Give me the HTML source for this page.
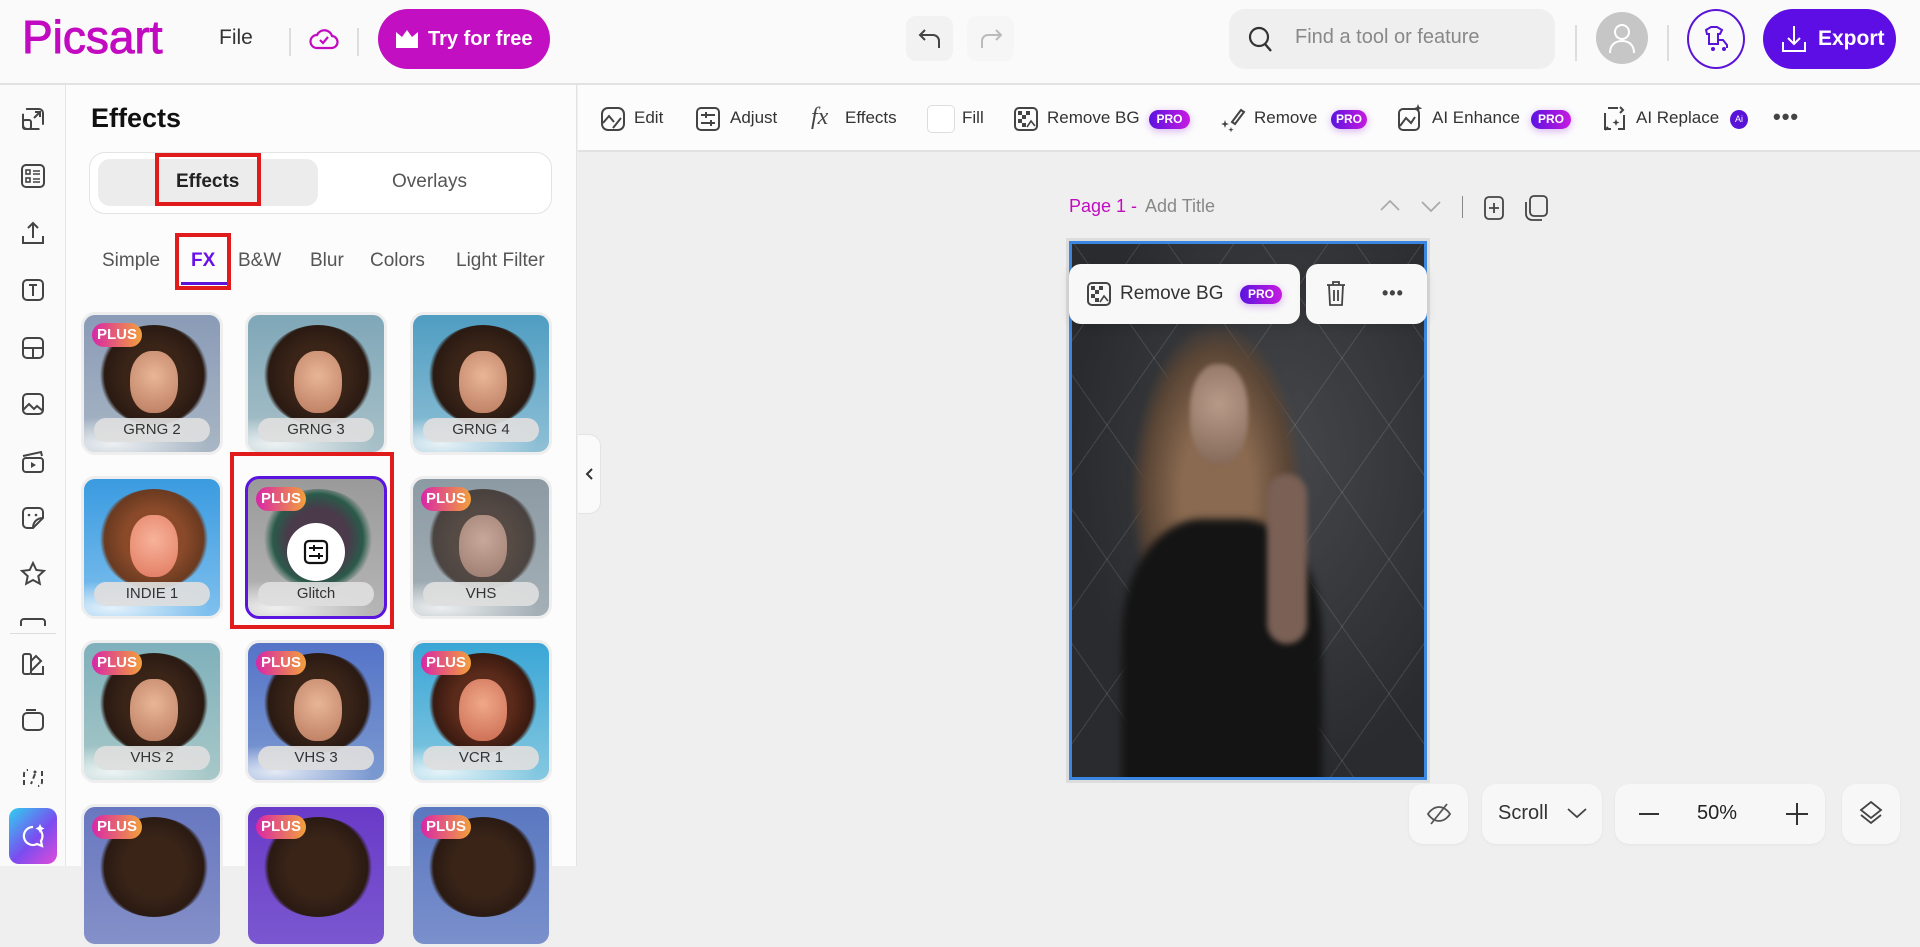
<!DOCTYPE html>
<html><head><meta charset="utf-8">
<style>
*{box-sizing:border-box;margin:0;padding:0}
body{width:1920px;height:866px;overflow:hidden;background:#efefef;font-family:"Liberation Sans",sans-serif;color:#222;position:relative}
.a{position:absolute}
.top{left:0;top:0;width:1920px;height:85px;background:#fafafa;border-bottom:2px solid #e2e2e2}
.sep{width:2px;height:28px;background:#ddd;top:28px}
.rail{left:0;top:85px;width:66px;height:781px;background:#fafafa;border-right:1px solid #e6e6e6}
.panel{left:66px;top:85px;width:511px;height:781px;background:#fcfcfc;border-right:1px solid #e3e3e3}
.tb{left:578px;top:85px;width:1342px;height:67px;background:#fcfcfc;border-bottom:2px solid #e2e2e2}
.ti{font-size:17px;color:#333;top:108px}
.pro{height:19px;border-radius:10px;background:linear-gradient(90deg,#5b13e0,#c71ae0);color:#fff;font-size:12px;font-weight:bold;line-height:19px;text-align:center;top:110px;box-shadow:0 2px 8px rgba(150,40,220,.35)}
.card{width:142px;height:143px;border-radius:14px;overflow:hidden;border:3px solid #eee}
.card .hair{position:absolute;left:14px;top:10px;width:112px;height:100px;border-radius:50%;background:radial-gradient(circle,#3a2418 40%,#2a1a12 66%,rgba(40,25,15,0) 72%)}
.card .face{position:absolute;left:46px;top:36px;width:48px;height:62px;border-radius:45%;background:radial-gradient(circle at 50% 40%,#e9b597,#b97a5e)}
.card .cl{position:absolute;left:0;bottom:0;width:142px;height:40px;background:radial-gradient(ellipse at 20% 80%,rgba(255,255,255,.8),rgba(255,255,255,0) 60%)}
.card .lb{position:absolute;left:10px;bottom:10px;width:116px;height:24px;border-radius:12px;background:rgba(222,222,222,.93);font-size:15px;color:#333;text-align:center;line-height:24px}
.plus{position:absolute;left:8px;top:8px;width:50px;height:24px;border-radius:12px;background:linear-gradient(90deg,#d926a8,#f2a03a);color:#fff;font-weight:bold;font-size:15px;line-height:24px;text-align:center}
.ri{left:20px;width:26px;height:26px}
.ctl{background:#f7f7f7;border-radius:14px;height:60px;top:784px;box-shadow:0 1px 3px rgba(0,0,0,.05)}
</style></head><body>

<!-- top bar -->
<div class="a top"></div>
<div class="a" style="left:22px;top:10px;font-size:46px;color:#c20bc1;letter-spacing:0px;-webkit-text-stroke:1px #c20bc1">Picsart</div>
<div class="a" style="left:219px;top:26px;font-size:21px;color:#333">File</div>
<div class="a sep" style="left:289px"></div>
<svg class="a" style="left:309px;top:24px" width="30" height="30" viewBox="0 0 30 30"><path d="M8 24h14a6 6 0 0 0 1-12 8 8 0 0 0-15-1 6 6 0 0 0 0 13z" fill="none" stroke="#c20bc1" stroke-width="2.2"/><path d="M11 16l3 3 5-6" fill="none" stroke="#c20bc1" stroke-width="2.2"/></svg>
<div class="a sep" style="left:357px"></div>
<div class="a" style="left:378px;top:9px;width:172px;height:60px;border-radius:30px;background:#c10fc1;color:#fff;font-size:20px;font-weight:bold;line-height:60px;padding-left:50px">Try for free</div>
<svg class="a" style="left:394px;top:28px" width="26" height="22" viewBox="0 0 26 22"><path d="M2 4l6 5 5-7 5 7 6-5v16H2z" fill="#fff"/></svg>
<div class="a" style="left:906px;top:16px;width:47px;height:45px;border-radius:10px;background:#f2f2f2"></div>
<svg class="a" style="left:917px;top:26px" width="26" height="26" viewBox="0 0 26 26"><path d="M8 4L3 9l5 5M3 9h13a6 6 0 0 1 6 6v7" fill="none" stroke="#444" stroke-width="2"/></svg>
<div class="a" style="left:967px;top:16px;width:47px;height:45px;border-radius:10px;background:#f6f6f6"></div>
<svg class="a" style="left:978px;top:26px" width="26" height="26" viewBox="0 0 26 26"><path d="M18 4l5 5-5 5M23 9H10a6 6 0 0 0-6 6v7" fill="none" stroke="#bbb" stroke-width="2"/></svg>
<div class="a" style="left:1229px;top:9px;width:326px;height:60px;border-radius:16px;background:#efefef"></div>
<svg class="a" style="left:1247px;top:25px" width="28" height="30" viewBox="0 0 28 30"><circle cx="12" cy="12" r="9" fill="none" stroke="#333" stroke-width="2.2"/><path d="M18 19l6 7" stroke="#333" stroke-width="2.4"/></svg>
<div class="a" style="left:1295px;top:26px;font-size:20px;color:#888">Find a tool or feature</div>
<div class="a sep" style="left:1575px;top:25px;height:36px"></div>
<div class="a" style="left:1596px;top:12px;width:52px;height:52px;border-radius:50%;background:#c6c6c6"></div>
<svg class="a" style="left:1607px;top:22px" width="30" height="32" viewBox="0 0 30 32"><circle cx="15" cy="10" r="7" fill="none" stroke="#fff" stroke-width="2"/><path d="M3 31c0-8 5-12 12-12s12 4 12 12" fill="none" stroke="#fff" stroke-width="2"/></svg>
<div class="a sep" style="left:1667px;top:25px;height:36px"></div>
<div class="a" style="left:1687px;top:9px;width:58px;height:60px;border-radius:50%;border:2px solid #5a14d8"></div>
<svg class="a" style="left:1701px;top:24px" width="30" height="30" viewBox="0 0 30 30"><path d="M5 6l5-3h6l5 3-2 4h-2v10H8V10H6z" fill="none" stroke="#5a14d8" stroke-width="2"/><circle cx="12" cy="25" r="2" fill="#5a14d8"/><circle cx="23" cy="25" r="2" fill="#5a14d8"/><path d="M17 16h5l4 5v3" fill="none" stroke="#5a14d8" stroke-width="2"/></svg>
<div class="a" style="left:1763px;top:9px;width:133px;height:60px;border-radius:30px;background:#5d0ee5;color:#fff;font-size:21px;font-weight:bold;line-height:60px;padding-left:55px">Export</div>
<svg class="a" style="left:1780px;top:24px" width="28" height="30" viewBox="0 0 28 30"><path d="M14 2v18M8 14l6 6 6-6M3 18v9h22v-9" fill="none" stroke="#fff" stroke-width="2"/></svg>

<!-- rail -->
<div class="a rail"></div>
<svg class="a ri" style="top:106px" viewBox="0 0 26 26"><rect x="3" y="3" width="20" height="20" rx="4" fill="none" stroke="#444" stroke-width="2" stroke-dasharray="30 6"/><rect x="3" y="14" width="8" height="9" rx="2" fill="none" stroke="#444" stroke-width="2"/><path d="M14 12l6-6M15 6h5v5" fill="none" stroke="#444" stroke-width="2"/></svg>
<svg class="a ri" style="top:163px" viewBox="0 0 26 26"><rect x="2" y="2" width="22" height="22" rx="4" fill="none" stroke="#444" stroke-width="2"/><rect x="6" y="7" width="4" height="4" fill="none" stroke="#444" stroke-width="1.6"/><rect x="6" y="15" width="4" height="4" fill="none" stroke="#444" stroke-width="1.6"/><path d="M13 8h7M13 11h7M13 16h7M13 19h7" stroke="#444" stroke-width="1.6"/></svg>
<svg class="a ri" style="top:220px" viewBox="0 0 26 26"><path d="M13 3v15M8 8l5-5 5 5M3 16v7h20v-7" fill="none" stroke="#444" stroke-width="2"/></svg>
<svg class="a ri" style="top:277px" viewBox="0 0 26 26"><rect x="3" y="3" width="20" height="20" rx="4" fill="none" stroke="#444" stroke-width="2"/><path d="M9 8h8M13 8v11" stroke="#444" stroke-width="2"/></svg>
<svg class="a ri" style="top:335px" viewBox="0 0 26 26"><rect x="3" y="3" width="20" height="20" rx="4" fill="none" stroke="#444" stroke-width="2"/><path d="M3 13h20M13 13v10" stroke="#444" stroke-width="2"/></svg>
<svg class="a ri" style="top:391px" viewBox="0 0 26 26"><rect x="3" y="3" width="20" height="20" rx="4" fill="none" stroke="#444" stroke-width="2"/><path d="M3 19l6-6 5 5 3-3 6 5" fill="none" stroke="#444" stroke-width="2"/></svg>
<svg class="a ri" style="top:449px" viewBox="0 0 26 26"><rect x="3" y="9" width="20" height="14" rx="3" fill="none" stroke="#444" stroke-width="2"/><path d="M3 7l18-4 1 4" fill="none" stroke="#444" stroke-width="2"/><path d="M11 13v6l5-3z" fill="#444"/></svg>
<svg class="a ri" style="top:505px" viewBox="0 0 26 26"><path d="M23 13V7a4 4 0 0 0-4-4H7a4 4 0 0 0-4 4v12a4 4 0 0 0 4 4h6z" fill="none" stroke="#444" stroke-width="2"/><path d="M13 23c0-6 4-10 10-10" fill="none" stroke="#444" stroke-width="2"/><circle cx="9" cy="10" r="1.3" fill="#444"/><circle cx="16" cy="10" r="1.3" fill="#444"/></svg>
<svg class="a ri" style="top:561px" viewBox="0 0 26 26"><path d="M13 2l3.3 7 7.7.9-5.7 5.2 1.5 7.6L13 19l-6.8 3.7 1.5-7.6L2 9.9 9.7 9z" fill="none" stroke="#444" stroke-width="2"/></svg>
<div class="a" style="left:20px;top:618px;width:26px;height:8px;border:2px solid #444;border-bottom:none;border-radius:4px 4px 0 0"></div>
<div class="a" style="left:10px;top:633px;width:46px;height:1px;background:#ddd"></div>
<svg class="a ri" style="top:651px" viewBox="0 0 26 26"><rect x="3" y="3" width="8" height="20" rx="2" fill="none" stroke="#444" stroke-width="2"/><path d="M11 10l5-5 5 5-10 10M11 23h12v-8" fill="none" stroke="#444" stroke-width="2"/></svg>
<svg class="a ri" style="top:707px" viewBox="0 0 26 26"><rect x="3" y="6" width="20" height="17" rx="4" fill="none" stroke="#444" stroke-width="2"/><path d="M6 3h10" stroke="#444" stroke-width="2"/></svg>
<svg class="a ri" style="top:765px" viewBox="0 0 26 26"><path d="M4 20V9a4 4 0 0 1 4-4M22 6v11a4 4 0 0 1-4 4M15 9l-4 10" fill="none" stroke="#444" stroke-width="2" stroke-dasharray="5 3"/><circle cx="15" cy="7" r="1.5" fill="#444"/></svg>
<div class="a" style="left:9px;top:808px;width:48px;height:56px;border-radius:10px;background:linear-gradient(135deg,#2fd0f0,#7b4cf0 55%,#e04bd8)"></div>
<svg class="a" style="left:19px;top:822px" width="28" height="28" viewBox="0 0 28 28"><path d="M14 5a9 9 0 1 0 4 17l5 2-1-5a9 9 0 0 0-2-12" fill="none" stroke="#fff" stroke-width="2.2"/><path d="M21 2l1.5 3 3 1.5-3 1.5L21 11l-1.5-3-3-1.5 3-1.5z" fill="#fff"/></svg>

<!-- panel -->
<div class="a panel"></div>
<div class="a" style="left:91px;top:103px;font-size:27px;font-weight:bold;color:#111">Effects</div>
<div class="a" style="left:89px;top:152px;width:463px;height:62px;border-radius:16px;border:1px solid #e3e3e3;background:#fff"></div>
<div class="a" style="left:98px;top:159px;width:220px;height:47px;border-radius:12px;background:#ececec"></div>
<div class="a" style="left:176px;top:171px;font-size:19px;font-weight:bold;color:#222">Effects</div>
<div class="a" style="left:392px;top:171px;font-size:19px;color:#555">Overlays</div>
<div class="a" style="left:155px;top:153px;width:106px;height:53px;border:4px solid #e11b1b"></div>
<div class="a" style="left:102px;top:250px;font-size:19px;color:#555">Simple</div>
<div class="a" style="left:191px;top:250px;font-size:19px;color:#6a10e8;font-weight:bold">FX</div>
<div class="a" style="left:181px;top:282px;width:46px;height:3px;background:#5a14d8"></div>
<div class="a" style="left:238px;top:250px;font-size:19px;color:#555">B&amp;W</div>
<div class="a" style="left:310px;top:250px;font-size:19px;color:#555">Blur</div>
<div class="a" style="left:370px;top:250px;font-size:19px;color:#555">Colors</div>
<div class="a" style="left:456px;top:250px;width:98px;overflow:hidden;white-space:nowrap;font-size:19px;color:#555">Light Filter</div>
<div class="a" style="left:175px;top:233px;width:56px;height:57px;border:4px solid #e11b1b"></div>

<!-- grid -->
<div class="a card" style="left:81px;top:312px;background:linear-gradient(#8a9bb7,#a8b6c4)"><div class="hair"></div><div class="face"></div><div class="cl"></div><div class="plus">PLUS</div><div class="lb">GRNG 2</div></div>
<div class="a card" style="left:245px;top:312px;background:linear-gradient(#7fa7b8,#a9c1c8)"><div class="hair"></div><div class="face"></div><div class="cl"></div><div class="lb">GRNG 3</div></div>
<div class="a card" style="left:410px;top:312px;background:linear-gradient(#4f9dc2,#8fc0d6)"><div class="hair"></div><div class="face"></div><div class="cl"></div><div class="lb">GRNG 4</div></div>
<div class="a card" style="left:81px;top:476px;background:linear-gradient(#3a9be0,#7fc0ee)"><div class="hair" style="background:radial-gradient(circle,#8a4a2a 40%,#6a3a20 66%,rgba(0,0,0,0) 72%)"></div><div class="face" style="background:radial-gradient(circle at 50% 40%,#f7b39a,#e0785e)"></div><div class="cl"></div><div class="lb">INDIE 1</div></div>
<div class="a card" style="left:245px;top:476px;background:linear-gradient(#9a9a9a,#b6b6b6);border:3px solid #5a14e0"><div class="hair" style="background:radial-gradient(circle,#4a3a4a 40%,#2a5a4a 60%,rgba(0,0,0,0) 72%)"></div><div class="cl"></div><div class="plus">PLUS</div><div class="lb">Glitch</div></div>
<div class="a" style="left:287px;top:523px;width:58px;height:58px;border-radius:50%;background:#fff"></div>
<svg class="a" style="left:303px;top:539px" width="26" height="26" viewBox="0 0 26 26"><rect x="2" y="2" width="22" height="22" rx="4" fill="none" stroke="#111" stroke-width="2.2"/><path d="M6 9h14M6 17h14M11 6v6M16 14v6" stroke="#111" stroke-width="2"/></svg>
<div class="a card" style="left:410px;top:476px;background:linear-gradient(#8c9aa4,#a4b0b6)"><div class="hair" style="opacity:.7"></div><div class="face" style="background:radial-gradient(circle at 50% 40%,#c8a89a,#9a7a6e)"></div><div class="cl"></div><div class="plus">PLUS</div><div class="lb">VHS</div></div>
<div class="a card" style="left:81px;top:640px;background:linear-gradient(#7fb0bb,#a8c8c8)"><div class="hair"></div><div class="face"></div><div class="cl"></div><div class="plus">PLUS</div><div class="lb">VHS 2</div></div>
<div class="a card" style="left:245px;top:640px;background:linear-gradient(#5574c8,#7c9ad0)"><div class="hair"></div><div class="face"></div><div class="cl"></div><div class="plus">PLUS</div><div class="lb">VHS 3</div></div>
<div class="a card" style="left:410px;top:640px;background:linear-gradient(#3aa6d6,#86c8e0)"><div class="hair" style="background:radial-gradient(circle,#5a2a1a 40%,#3a1a10 66%,rgba(0,0,0,0) 72%)"></div><div class="face" style="background:radial-gradient(circle at 50% 40%,#f0a88a,#c8684e)"></div><div class="cl"></div><div class="plus">PLUS</div><div class="lb">VCR 1</div></div>
<div class="a card" style="left:81px;top:804px;background:linear-gradient(#6878c0,#8490c8)"><div class="hair"></div><div class="plus">PLUS</div></div>
<div class="a card" style="left:245px;top:804px;background:linear-gradient(#6a3ac8,#7a58d0)"><div class="hair"></div><div class="plus">PLUS</div></div>
<div class="a card" style="left:410px;top:804px;background:linear-gradient(#5a78c0,#7a90cc)"><div class="hair"></div><div class="plus">PLUS</div></div>
<div class="a" style="left:230px;top:452px;width:164px;height:177px;border:4px solid #e11b1b"></div>
<div class="a" style="left:578px;top:434px;width:23px;height:80px;border-radius:0 12px 12px 0;background:#fafafa;border:1px solid #e3e3e3;border-left:none"></div>
<svg class="a" style="left:584px;top:467px" width="12" height="14" viewBox="0 0 12 14"><path d="M8 2L3 7l5 5" fill="none" stroke="#333" stroke-width="2"/></svg>

<!-- toolbar -->
<div class="a tb"></div>
<svg class="a" style="left:600px;top:106px" width="26" height="26" viewBox="0 0 26 26"><rect x="2" y="2" width="22" height="22" rx="6" fill="none" stroke="#444" stroke-width="2"/><path d="M3 17l6-7 5 6M13 22l8-10" fill="none" stroke="#444" stroke-width="2"/></svg>
<div class="a ti" style="left:634px">Edit</div>
<svg class="a" style="left:695px;top:106px" width="26" height="26" viewBox="0 0 26 26"><rect x="2" y="2" width="22" height="22" rx="4" fill="none" stroke="#444" stroke-width="2"/><path d="M6 9h14M6 17h14M11 6v6M16 14v6" stroke="#444" stroke-width="2"/></svg>
<div class="a ti" style="left:730px">Adjust</div>
<div class="a" style="left:811px;top:104px;font-size:24px;font-style:italic;font-family:'Liberation Serif',serif;color:#444">fx</div>
<div class="a ti" style="left:845px">Effects</div>
<div class="a" style="left:927px;top:105px;width:28px;height:28px;border-radius:5px;border:1px solid #ddd;background:#fff"></div>
<div class="a ti" style="left:962px">Fill</div>
<svg class="a" style="left:1013px;top:106px" width="26" height="26" viewBox="0 0 26 26"><rect x="2" y="2" width="22" height="22" rx="4" fill="none" stroke="#444" stroke-width="2"/><path d="M5 5h4v4H5zM9 9h4v4H9zM5 13h4v4H5zM9 17h4v4H9zM13 5h4v4h-4z" fill="#444"/><path d="M14 21l4-6 4 5" fill="none" stroke="#444" stroke-width="1.6"/></svg>
<div class="a ti" style="left:1047px">Remove BG</div>
<div class="a pro" style="left:1149px;width:41px">PRO</div>
<svg class="a" style="left:1220px;top:106px" width="26" height="28" viewBox="0 0 26 28"><path d="M12 16l9-12 3 2-9 12z" fill="none" stroke="#444" stroke-width="2"/><path d="M5 14l1 3 3 1-3 1-1 3-1-3-3-1 3-1zM11 21l.7 2 2 .7-2 .7-.7 2-.7-2-2-.7 2-.7z" fill="#444"/></svg>
<div class="a ti" style="left:1254px">Remove</div>
<div class="a pro" style="left:1331px;width:36px">PRO</div>
<svg class="a" style="left:1397px;top:104px" width="26" height="28" viewBox="0 0 26 28"><rect x="2" y="5" width="20" height="21" rx="4" fill="none" stroke="#444" stroke-width="2"/><path d="M3 22l6-8 5 5 4-6" fill="none" stroke="#444" stroke-width="2"/><path d="M21 0l1.2 3 3 1.2-3 1.2L21 8.5l-1.2-3-3-1.2 3-1.2z" fill="#444"/></svg>
<div class="a ti" style="left:1432px">AI Enhance</div>
<div class="a pro" style="left:1531px;width:40px">PRO</div>
<svg class="a" style="left:1602px;top:105px" width="26" height="28" viewBox="0 0 26 28"><path d="M6 3h10M3 8v16h6M22 10v14h-6" fill="none" stroke="#444" stroke-width="2"/><path d="M18 2l3 3-3 3M6 22l-3 3" fill="none" stroke="#444" stroke-width="2"/><path d="M14 14l1 2.5 2.5 1-2.5 1-1 2.5-1-2.5-2.5-1 2.5-1z" fill="#444"/></svg>
<div class="a ti" style="left:1636px">AI Replace</div>
<div class="a" style="left:1730px;top:110px;width:18px;height:19px;border-radius:50%;background:#5a14d8;color:#fff;font-size:9px;line-height:19px;text-align:center">Ai</div>
<div class="a" style="left:1773px;top:104px;font-size:22px;font-weight:bold;color:#444;letter-spacing:1px">•••</div>

<!-- page header -->
<div class="a" style="left:1069px;top:196px;font-size:18px;color:#c20bc1">Page 1 -</div>
<div class="a" style="left:1145px;top:196px;font-size:18px;color:#888">Add Title</div>
<svg class="a" style="left:1378px;top:198px" width="24" height="16" viewBox="0 0 24 16"><path d="M3 12l9-9 9 9" fill="none" stroke="#aaa" stroke-width="1.8"/></svg>
<svg class="a" style="left:1419px;top:198px" width="24" height="16" viewBox="0 0 24 16"><path d="M3 4l9 9 9-9" fill="none" stroke="#aaa" stroke-width="1.8"/></svg>
<div class="a" style="left:1462px;top:196px;width:1px;height:22px;background:#888"></div>
<svg class="a" style="left:1483px;top:195px" width="22" height="26" viewBox="0 0 22 26"><rect x="2" y="2" width="18" height="22" rx="4" fill="none" stroke="#444" stroke-width="1.8"/><path d="M11 8v10M6 13h10" stroke="#444" stroke-width="1.8"/></svg>
<svg class="a" style="left:1523px;top:194px" width="26" height="28" viewBox="0 0 26 28"><rect x="7" y="2" width="17" height="20" rx="4" fill="none" stroke="#444" stroke-width="1.8"/><path d="M3 8v12a6 6 0 0 0 6 6h10" fill="none" stroke="#444" stroke-width="1.8"/></svg>

<!-- canvas image -->
<div class="a" style="left:1066px;top:238px;width:364px;height:545px;background:#dcdcdc"></div>
<div class="a" style="left:1069px;top:241px;width:358px;height:539px;border:3px solid #3a86e0;overflow:hidden;background:radial-gradient(ellipse at 60% 40%,#45474b,#2a2b2e 70%)">
  <div class="a" style="left:0;top:0;width:100%;height:100%;background:repeating-linear-gradient(55deg,rgba(255,255,255,0) 0 76px,rgba(255,255,255,.12) 76px 77px),repeating-linear-gradient(-55deg,rgba(255,255,255,0) 0 76px,rgba(255,255,255,.12) 76px 77px)"></div>
  <div class="a" style="left:60px;top:80px;width:170px;height:340px;border-radius:50% 50% 40% 40%;background:radial-gradient(ellipse,#8a6a50 30%,#5a4535 60%,rgba(60,45,35,0) 72%);filter:blur(3px)"></div>
  <div class="a" style="left:118px;top:120px;width:58px;height:100px;border-radius:45%;background:radial-gradient(circle at 50% 40%,#b89a88,#806555);filter:blur(2px)"></div>
  <div class="a" style="left:50px;top:275px;width:200px;height:290px;border-radius:40% 40% 0 0;background:#141414;filter:blur(4px)"></div>
  <div class="a" style="left:195px;top:230px;width:40px;height:170px;border-radius:20px;background:#7a6055;filter:blur(3px)"></div>
</div>
<div class="a" style="left:1069px;top:264px;width:231px;height:60px;border-radius:12px;background:#f8f8f8;box-shadow:0 3px 10px rgba(0,0,0,.12)"></div>
<svg class="a" style="left:1086px;top:281px" width="26" height="26" viewBox="0 0 26 26"><rect x="2" y="2" width="22" height="22" rx="4" fill="none" stroke="#444" stroke-width="2"/><path d="M5 5h4v4H5zM9 9h4v4H9zM5 13h4v4H5zM9 17h4v4H9zM13 5h4v4h-4z" fill="#444"/><path d="M14 21l4-6 4 5" fill="none" stroke="#444" stroke-width="1.6"/></svg>
<div class="a" style="left:1120px;top:283px;font-size:19px;color:#333">Remove BG</div>
<div class="a pro" style="left:1240px;top:285px;width:42px">PRO</div>
<div class="a" style="left:1306px;top:264px;width:121px;height:60px;border-radius:12px;background:#f8f8f8;box-shadow:0 3px 10px rgba(0,0,0,.12)"></div>
<svg class="a" style="left:1325px;top:280px" width="22" height="28" viewBox="0 0 22 28"><path d="M2 5h18M8 5V2h6v3M4 5l1 20h12l1-20M9 10v11M13 10v11" fill="none" stroke="#444" stroke-width="1.8"/></svg>
<div class="a" style="left:1382px;top:283px;font-size:18px;font-weight:bold;color:#444;letter-spacing:1px">•••</div>

<!-- bottom controls -->
<div class="a ctl" style="left:1409px;width:59px"></div>
<svg class="a" style="left:1426px;top:801px" width="26" height="26" viewBox="0 0 26 26"><path d="M2 13s4-7 11-7 11 7 11 7-4 7-11 7S2 13 2 13z" fill="none" stroke="#555" stroke-width="1.8"/><path d="M5 23L21 3" stroke="#555" stroke-width="1.8"/></svg>
<div class="a ctl" style="left:1482px;width:120px"></div>
<div class="a" style="left:1498px;top:802px;font-size:20px;color:#333">Scroll</div>
<svg class="a" style="left:1566px;top:806px" width="22" height="14" viewBox="0 0 22 14"><path d="M2 3l9 8 9-8" fill="none" stroke="#444" stroke-width="1.8"/></svg>
<div class="a ctl" style="left:1615px;width:210px"></div>
<div class="a" style="left:1639px;top:813px;width:20px;height:2px;background:#333"></div>
<div class="a" style="left:1697px;top:802px;font-size:20px;color:#222">50%</div>
<div class="a" style="left:1786px;top:813px;width:22px;height:2px;background:#333"></div>
<div class="a" style="left:1796px;top:803px;width:2px;height:22px;background:#333"></div>
<div class="a ctl" style="left:1842px;width:58px"></div>
<svg class="a" style="left:1858px;top:800px" width="26" height="28" viewBox="0 0 26 28"><path d="M13 2l10 8-10 8-10-8z" fill="none" stroke="#444" stroke-width="1.8"/><path d="M3 15l10 8 10-8" fill="none" stroke="#444" stroke-width="1.8"/></svg>
</body></html>
